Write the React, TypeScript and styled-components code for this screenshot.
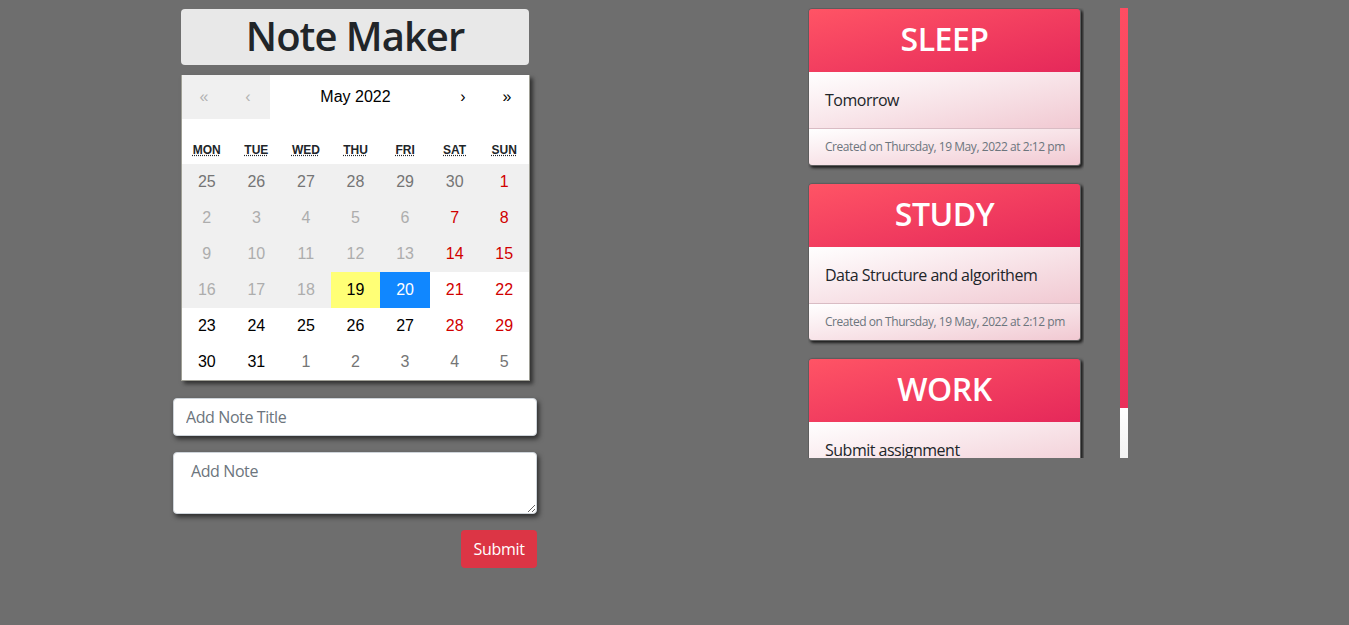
import React from "react";
import styled, { createGlobalStyle } from "styled-components";

const GlobalStyle = createGlobalStyle`
  html, body { margin: 0; padding: 0; background: #6e6e6e; }
  body { font-family: "Open Sans", "Noto Sans", sans-serif; color: #212529; }
  * { box-sizing: border-box; }
`;

const Page = styled.div`
  display: flex;
  align-items: flex-start;
  gap: 271px;
  padding: 8px 0 0 173px;
  min-height: 625px;
`;

const LeftCol = styled.div`
  width: 364px;
  display: flex;
  flex-direction: column;
  padding-top: 1px;
`;

const TitleBox = styled.h1`
  margin: 0 8px;
  height: 56px;
  background: #e8e8e8;
  border-radius: 4px;
  font-size: 40px;
  font-weight: 600;
  letter-spacing: -1px;
  line-height: 54px;
  text-align: center;
  color: #212529;
`;

const Calendar = styled.div`
  margin: 10px 8px 0;
  width: 349px;
  background: #fff;
  border: 1px solid #a0a096;
  border-top: 0;
  box-shadow: 3px 3px 4px rgba(0, 0, 0, 0.55);
  font-family: "Liberation Sans", Arial, sans-serif;
`;

const Nav = styled.div`
  display: flex;
  height: 44px;
  margin-bottom: 16px;
`;

const NavButton = styled.button<{ $disabled?: boolean; $grow?: boolean }>`
  min-width: 44px;
  flex-grow: ${(p) => (p.$grow ? 1 : 0)};
  border: 0;
  margin: 0;
  padding: 0;
  font: 16px "Liberation Sans", Arial, sans-serif;
  background: ${(p) => (p.$disabled ? "#f0f0f0" : "transparent")};
  color: ${(p) => (p.$disabled ? "#b3b3b3" : "#000")};
`;

const Grid = styled.div`
  display: grid;
  grid-template-columns: repeat(7, 1fr);
`;

const Weekday = styled.div`
  height: 29px;
  display: flex;
  align-items: center;
  justify-content: center;
  font-size: 12px;
  font-weight: bold;
  text-transform: uppercase;
  color: #212529;

  abbr {
    text-decoration: underline dotted;
  }
`;

type TileKind = "neighbor" | "disabled" | "weekend" | "normal" | "now" | "active";

const tileColors: Record<TileKind, string> = {
  neighbor: "#757575",
  disabled: "#adadad",
  weekend: "#d10000",
  normal: "#000",
  now: "#000",
  active: "#fff",
};

const Tile = styled.div<{ $kind: TileKind; $off: boolean }>`
  height: 36px;
  display: flex;
  align-items: center;
  justify-content: center;
  font-size: 16px;
  color: ${(p) => tileColors[p.$kind]};
  background: ${(p) =>
    p.$kind === "now" ? "#ffff76" : p.$kind === "active" ? "#1087ff" : p.$off ? "#f0f0f0" : "#fff"};
`;

const FormInput = styled.input`
  margin-top: 17px;
  width: 100%;
  height: 38px;
  padding: 6px 12px;
  font: 16px "Open Sans", sans-serif;
  letter-spacing: -0.4px;
  color: #212529;
  background: #fff;
  border: 1px solid #ced4da;
  border-radius: 4px;
  box-shadow: 2px 3px 5px rgba(0, 0, 0, 0.6);
  &::placeholder { color: #6c757d; }
`;

const FormArea = styled.textarea`
  margin-top: 16px;
  width: 100%;
  height: 62px;
  padding: 6px 17px;
  font: 16px "Open Sans", sans-serif;
  letter-spacing: -0.4px;
  line-height: 24px;
  color: #212529;
  background: #fff;
  border: 1px solid #ced4da;
  border-radius: 4px;
  box-shadow: 2px 3px 5px rgba(0, 0, 0, 0.6);
  resize: vertical;
  &::placeholder { color: #6c757d; }
`;

const SubmitButton = styled.button`
  align-self: flex-end;
  margin-top: 16px;
  width: 76px;
  height: 38px;
  padding: 0;
  border: 0;
  border-radius: 4px;
  background: #dc3545;
  color: #fff;
  font: 16px "Open Sans", sans-serif;
  letter-spacing: -0.3px;
`;

const NotesPanel = styled.div`
  display: flex;
  align-items: flex-start;
  gap: 36px;
`;

const NotesList = styled.div`
  width: 276px;
  height: 450px;
  overflow: hidden;
`;

const ScrollTrack = styled.div`
  width: 8px;
  height: 450px;
  background: linear-gradient(#fff 88%, #f2f2f2);
  display: flex;
  flex-direction: column;
`;

const ScrollThumb = styled.div`
  height: 400px;
  background: linear-gradient(#ff4d62, #e8305a);
`;

const Card = styled.div`
  width: 273px;
  border: 1px solid rgba(0, 0, 0, 0.15);
  border-radius: 4px;
  overflow: hidden;
  box-shadow: 2px 2px 3px rgba(0, 0, 0, 0.75);
  margin-bottom: 17px;
`;

const CardHeader = styled.div`
  height: 63px;
  background: linear-gradient(to bottom right, #ff5465, #e5285a);
  color: #fff;
  font-size: 32px;
  font-weight: 600;
  letter-spacing: -0.5px;
  line-height: 59px;
  text-align: center;
`;

const CardBody = styled.div`
  height: 56px;
  padding: 16px;
  font-size: 16px;
  letter-spacing: -0.5px;
  line-height: 24px;
  color: #212529;
  white-space: nowrap;
  background: linear-gradient(to bottom right, #ffffff, #f1c9d2);
`;

const CardFooter = styled.div`
  height: 37px;
  padding: 8px 16px;
  border-top: 1px solid #d9bcc4;
  font-size: 12px;
  letter-spacing: -0.45px;
  line-height: 20px;
  white-space: nowrap;
  color: #6c757d;
  background: linear-gradient(to bottom right, #ffffff, #f1c9d2);
`;

const weekdays = ["Mon", "Tue", "Wed", "Thu", "Fri", "Sat", "Sun"];
const weekdayTitles = ["Monday", "Tuesday", "Wednesday", "Thursday", "Friday", "Saturday", "Sunday"];

type Day = { n: number; kind: TileKind; off: boolean };

const buildDays = (): Day[] => {
  const days: Day[] = [];
  [25, 26, 27, 28, 29, 30].forEach((n) => days.push({ n, kind: "neighbor", off: true }));
  for (let n = 1; n <= 31; n++) {
    const col = days.length % 7;
    const weekend = col >= 5;
    const off = n < 19;
    let kind: TileKind = weekend ? "weekend" : off ? "disabled" : "normal";
    if (n === 19) kind = "now";
    if (n === 20) kind = "active";
    days.push({ n, kind, off });
  }
  [1, 2, 3, 4, 5].forEach((n) => days.push({ n, kind: "neighbor", off: false }));
  return days;
};

const notes = [
  { title: "SLEEP", body: "Tomorrow" },
  { title: "STUDY", body: "Data Structure and algorithem" },
  { title: "WORK", body: "Submit assignment" },
];

export default function App() {
  const days = buildDays();
  return (
    <>
      <GlobalStyle />
      <Page>
        <LeftCol>
          <TitleBox>Note Maker</TitleBox>
          <Calendar>
            <Nav>
              <NavButton $disabled>«</NavButton>
              <NavButton $disabled>‹</NavButton>
              <NavButton $grow>May 2022</NavButton>
              <NavButton>›</NavButton>
              <NavButton>»</NavButton>
            </Nav>
            <Grid>
              {weekdays.map((w, i) => (
                <Weekday key={w}>
                  <abbr title={weekdayTitles[i]}>{w}</abbr>
                </Weekday>
              ))}
            </Grid>
            <Grid>
              {days.map((d, i) => (
                <Tile key={i} $kind={d.kind} $off={d.off}>
                  {d.n}
                </Tile>
              ))}
            </Grid>
          </Calendar>
          <FormInput placeholder="Add Note Title" />
          <FormArea placeholder="Add Note" />
          <SubmitButton>Submit</SubmitButton>
        </LeftCol>
        <NotesPanel>
          <NotesList>
            {notes.map((n) => (
              <Card key={n.title}>
                <CardHeader>{n.title}</CardHeader>
                <CardBody>{n.body}</CardBody>
                <CardFooter>Created on Thursday, 19 May, 2022 at 2:12 pm</CardFooter>
              </Card>
            ))}
          </NotesList>
          <ScrollTrack>
            <ScrollThumb />
          </ScrollTrack>
        </NotesPanel>
      </Page>
    </>
  );
}
